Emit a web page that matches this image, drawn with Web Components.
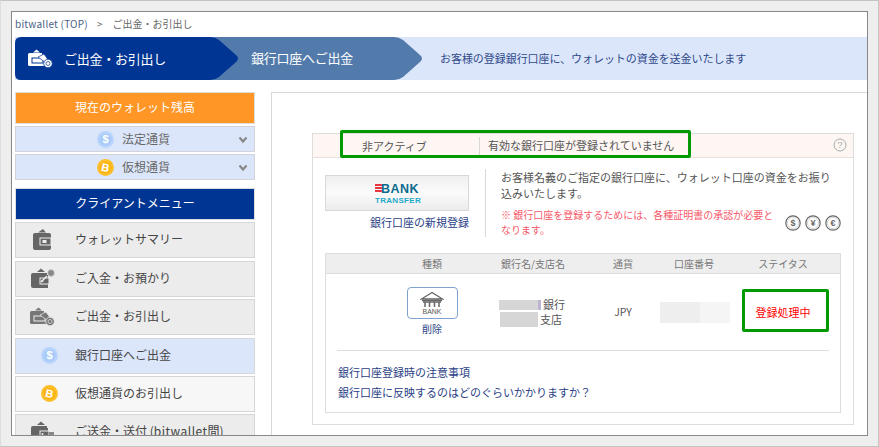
<!DOCTYPE html>
<html lang="ja"><head><meta charset="utf-8"><title>bitwallet</title>
<style>
html,body{margin:0;padding:0;background:#eee;width:879px;height:447px;overflow:hidden;font-family:"Noto Sans CJK JP","Noto Sans",sans-serif;color:#444}
</style></head><body>
<bw-frame>
  <bw-crumbs></bw-crumbs>
  <bw-steps></bw-steps>
  <div style="display:flex;margin-top:12px">
    <bw-sidebar></bw-sidebar>
    <bw-main></bw-main>
  </div>
</bw-frame>
<script>
const FONT='"Noto Sans CJK JP","Noto Sans",sans-serif';
const wallet=(fill,extra='',vb='0 0 26 22',w=26,h=22)=>`<svg width="${w}" height="${h}" viewBox="${vb}" aria-hidden="true"><path d="M8 4 12 0.5 16 4Z" fill="${fill}"/><path d="M2 7a2 2 0 0 1 2-2h14v2h1v13H4a2 2 0 0 1-2-2Z" fill="${fill}"/><rect x="11" y="10" width="9" height="6" fill="${fill}" stroke="#eee" stroke-width="1"/><circle cx="13.5" cy="13" r="1" fill="#eee"/>${extra}</svg>`;
const walletBig=`<svg width="20" height="21" viewBox="0 0 20 21" aria-hidden="true"><path d="M6 3.500 11 0 14 3.500Z" fill="#666"/><path d="M1 6a2 2 0 0 1 2-2h14a2 2 0 0 1 2 2v13a2 2 0 0 1-2 2H3a2 2 0 0 1-2-2Z" fill="#666"/><rect x="8" y="9" width="11" height="7" fill="#666" stroke="#eee" stroke-width="1"/><rect x="10.500" y="11" width="4" height="3" fill="#eee"/></svg>`;
const dep=wallet('#666',`<path d="M12 14 18 8" stroke="#eee" stroke-width="1.500"/><circle cx="22" cy="5" r="3.400" fill="#888" stroke="#ddd" stroke-width=".6"/>`);
const wd=(c,b)=>`<svg width="26" height="20" viewBox="0 0 26 20" aria-hidden="true"><path d="M6 3.500 9.500 0.500 13 3.500Z" fill="${c}"/><path d="M1 5.500a1.500 1.500 0 0 1 1.500-1.500H15v1.500l2 3V17H2.500A1.500 1.500 0 0 1 1 15.500Z" fill="${c}"/><rect x="5" y="9" width="11" height="5" fill="${c}" stroke="${b}"/><path d="M11 8 17 5l5 7-3 2Z" fill="${c}" stroke="${b}" stroke-width=".7"/><circle cx="21" cy="14.500" r="4.300" fill="${c}" stroke="${b}" stroke-width=".8"/><circle cx="21" cy="14.500" r="2" fill="none" stroke="${b}" stroke-width=".7"/></svg>`;
const coin=(bg,ring,sym,rot)=>`<svg width="17" height="17" viewBox="0 0 17 17" aria-hidden="true"><circle cx="8.500" cy="8.500" r="8.500" fill="${ring}"/><circle cx="8.500" cy="8.500" r="6.300" fill="${bg}"/><text x="8.500" y="12.300" text-anchor="middle" font-family="Liberation Sans" font-size="11" font-weight="700" fill="#fff" transform="rotate(${rot} 8.500 8.500)">${sym}</text></svg>`;
const usd=coin('#a9cbfb','#b9d5fb','$',0), btc=coin('#fcb416','#fcc02c','B',12);
const def=(n,css,html)=>customElements.define(n,class extends HTMLElement{connectedCallback(){if(this.shadowRoot)return;const s=this.attachShadow({mode:'open'});s.innerHTML=`<style>${css}</style>`+html;}});

def('bw-frame',`:host{display:block;position:relative;box-sizing:border-box;margin:0;width:879px;height:447px;border:1px solid #c4c4c4;border-left-color:#ddd;padding:10px;overflow:hidden}
.w{box-sizing:border-box;width:857px;height:425px;border:1px solid #888;background:#fff;overflow:hidden;padding:0 0 0 3px}`,`<div class="w"><slot></slot></div>`);

def('bw-crumbs',`:host{display:block;height:25px;font:10px/24px ${FONT};white-space:nowrap}
span{color:#666}.a{color:#4a6285;letter-spacing:.22px}i{font-style:normal;margin:0 10px 0 9px;color:#666}`,
`<span class="a">bitwallet (TOP)</span><i>&gt;</i><span>ご出金・お引出し</span>`);

def('bw-steps',`:host{display:flex;height:43px;background:#dce6fb;font:13px/42px ${FONT};color:#fff;white-space:nowrap;align-items:stretch;letter-spacing:-.25px}
.s1{position:relative;z-index:2;width:223px;flex:none;background:#003594;display:flex;align-items:center;padding-left:12px;box-sizing:border-box;clip-path:path("M6 0H195Q200 0 204 3L221 18Q225 21.500 221 25L204 40Q200 43 195 43H6Q0 43 0 37V6Q0 0 6 0Z")}
.s1 svg{margin-right:11px}
.s2{width:212px;flex:none;margin-left:-28px;background:#527aab;padding-left:41px;box-sizing:border-box;clip-path:path("M0 0H184Q189 0 193 3L210 18Q214 21.500 210 25L193 40Q189 43 184 43H0Z")}
.d{font-size:11px;color:#2f4a8a;margin-left:18px;letter-spacing:-.05px}`,
`<div class="s1">${wd('#fff','#003594')}<span>ご出金・お引出し</span></div><div class="s2">銀行口座へご出金</div><div class="d">お客様の登録銀行口座に、ウォレットの資金を送金いたします</div>`);

def('bw-sidebar',`:host{display:block;width:240px;flex:none;font:12px/1 ${FONT}}
.h{box-sizing:border-box;height:32px;border:1px solid #ddd;color:#fff;display:flex;align-items:center;justify-content:center;font-size:12px;padding-bottom:2px}
.o{background:#ff9626}.b{background:#003594;margin-top:8px}
.c{box-sizing:border-box;height:26px;margin-top:2px;background:#dce6fb;border:1px solid #d3d3dc;position:relative;display:flex;align-items:center;justify-content:center;color:#666;gap:8px;padding-right:3px}
.c svg.ch{position:absolute;right:6px;top:9px}
.gap{height:2px}`,
`<div class="h o">現在のウォレット残高</div>
<div class="c">${usd}<span>法定通貨</span><svg class="ch" width="10" height="8" viewBox="0 0 10 8"><path d="M1.500 1.500 5 5.500 8.500 1.500" fill="none" stroke="#888" stroke-width="2.200"/></svg></div>
<div class="c">${btc}<span>仮想通貨</span><svg class="ch" width="10" height="8" viewBox="0 0 10 8"><path d="M1.500 1.500 5 5.500 8.500 1.500" fill="none" stroke="#888" stroke-width="2.200"/></svg></div>
<div class="h b">クライアントメニュー</div><div class="gap"></div>
<bw-item mt="0" pad="16" bg="#ececec" label="ウォレットサマリー" icon="big"></bw-item>
<bw-item mt="3" pad="13" bg="#ececec" label="ご入金・お預かり" icon="dep"></bw-item>
<bw-item mt="2" pad="13" bg="#ececec" label="ご出金・お引出し" icon="wd"></bw-item>
<bw-item mt="3" pad="25" bg="#dce6fb" label="銀行口座へご出金" icon="usd"></bw-item>
<bw-item mt="2" pad="25" bg="#f7f7f7" label="仮想通貨のお引出し" icon="btc"></bw-item>
<bw-item mt="2" pad="13" bg="#ececec" label="ご送金・送付 (&lt;span style='letter-spacing:.5px'&gt;bitwallet&lt;/span&gt;間)" icon="dep2"></bw-item>`);

customElements.define('bw-item',class extends HTMLElement{connectedCallback(){if(this.shadowRoot)return;const s=this.attachShadow({mode:'open'});
const ic={big:walletBig,dep:dep,wd:wd('#777','#eee'),usd:usd,btc:btc,dep2:wallet('#666','<rect x="20" y="11" width="5" height="7" fill="#888"/>')}[this.getAttribute('icon')];
s.innerHTML=`<style>:host{display:flex;box-sizing:border-box;height:36px;margin-top:${this.getAttribute('mt')}px;background:${this.getAttribute('bg')};border:1px solid #d6d6d6;padding-bottom:2px;align-items:center;color:#444;font:12px/1 ${FONT};white-space:nowrap}
.i{width:59px;flex:none;display:flex;padding-left:${this.getAttribute('pad')}px;box-sizing:border-box;margin-top:1px}</style><div class="i">${ic}</div><span>${this.getAttribute('label')}</span>`;}});

def('bw-main',`:host{display:block;position:relative;box-sizing:border-box;width:596px;margin-left:16px;border-top:1px solid #d8d8d8;border-left:1px solid #d8d8d8;height:360px;padding:40px 13px 0 40px;font:11px/1 ${FONT};color:#555}
.p{box-sizing:border-box;width:542px;height:292px;border:1px solid #ddd;padding:0}
.st{box-sizing:border-box;height:24px;background:#fdf6f3;border-bottom:1px solid #eadfda;display:flex;align-items:center;position:relative}
.st .a{margin-left:49px;width:117px;border-right:1px solid #d8d8d8;line-height:18px;color:#555}
.st .b{margin-left:8px;color:#555}
.q{position:absolute;right:6px;top:4px}
.top{display:flex;padding:11px 0 0 12px;height:84px;box-sizing:border-box}
.bank{width:144px}
.btn{box-sizing:border-box;height:36px;margin-top:6px;border:1px solid #d8d8d8;background:linear-gradient(#efefef,#fbfbfb 50%,#ececec);display:flex;align-items:center;justify-content:center}
.reg{text-align:right;color:#2b3f86;margin-top:5px;line-height:12px}
.txt{margin-left:16px;border-left:1px solid #d8d8d8;padding:1px 0 0 15px;width:348px;height:68px;box-sizing:border-box;position:relative;line-height:15.500px;color:#555}
.n{color:#f5596a;font-size:10px;line-height:15px;margin-top:6px;width:280px}
.cur{position:absolute;right:-8px;top:46px;display:flex;gap:4px}
.tb{box-sizing:border-box;width:516px;height:160px;margin:11px 0 0 12px;border:1px solid #ddd}
.hd{display:grid;box-sizing:border-box;height:20px;background:#eee;border-bottom:1px solid #ddd;font-size:10px;line-height:19px;color:#777;text-align:center}
.cols{grid-template-columns:56px 100px 102px 78px 64px 114px}
.row{display:grid;height:76px;align-items:center;text-align:center}
.bk{display:flex;flex-direction:column;align-items:center;margin-top:-2px}
.box{box-sizing:border-box;width:51px;height:32px;border:1px solid #7fa3cf;border-radius:4px;display:flex;align-items:center;justify-content:center}
.del{color:#2b3f86;margin-top:4px;line-height:12px;font-size:10px}
.nm{text-align:left;line-height:15px;font-size:11px;color:#555;margin-left:17px}
.nm div{display:flex;align-items:center}
.m1{display:inline-block;width:42px;height:10px;margin-right:2px;background:linear-gradient(90deg,#d6d6d6 39px,#bdb5cf 39px)}
.m2{display:inline-block;width:38px;height:15px;background:#d6d6d6;margin:0 2px 0 1px}
.acc{display:block;width:70px;height:21px;background:linear-gradient(90deg,#eee 40px,#f5f5f5 40px);margin-left:-2px}
.red{color:#f00;font-size:11px}
.ln{height:1px;background:#ddd;margin:0 11px}
.lk{padding:11px 0 0 12px;color:#2b3f86;line-height:20px}
.g{position:absolute;box-sizing:border-box;border:3px solid #090;border-radius:2px}`,
`<div class="p">
  <div class="st"><div class="a">非アクティブ</div><div class="b">有効な銀行口座が登録されていません</div>
    <svg class="q" width="14" height="14" viewBox="0 0 14 14"><circle cx="7" cy="7" r="6" fill="none" stroke="#aaa" stroke-width="1"/><text x="7" y="10.200" text-anchor="middle" font-family="Liberation Sans" font-size="9.500" fill="#aaa">?</text></svg></div>
  <div class="top">
    <div class="bank"><div class="btn"><bw-banklogo></bw-banklogo></div><div class="reg">銀行口座の新規登録</div></div>
    <div class="txt">お客様名義のご指定の銀行口座に、ウォレット口座の資金をお振り込みいたします。
      <div class="n">※ 銀行口座を登録するためには、各種証明書の承認が必要となります。</div>
      <div class="cur">
      ${['$','¥','€'].map(c=>`<svg width="16" height="16" viewBox="0 0 16 16"><circle cx="8" cy="8" r="7.200" fill="#fff" stroke="#666" stroke-width="1.200"/><circle cx="8" cy="8" r="5.600" fill="none" stroke="#bbb" stroke-width=".6"/><text x="8" y="11.300" text-anchor="middle" font-family="Liberation Sans" font-size="9" font-weight="700" fill="#666">${c}</text></svg>`).join('')}
      </div>
    </div>
  </div>
  <div class="tb">
    <div class="hd cols"><span></span><span>種類</span><span>銀行名/支店名</span><span>通貨</span><span>口座番号</span><span>ステイタス</span></div>
    <div class="row cols">
      <span></span>
      <div class="bk"><div class="box"><svg width="24" height="24" viewBox="0 0 24 24"><path d="M12 1.500 1.500 8h21Z" fill="none" stroke="#666" stroke-width="1.300"/><path d="M2 9.500h20" stroke="#666" stroke-width="1.400"/><path d="M5 11v5M9.500 11v5M14.500 11v5M19 11v5M3 11h18" stroke="#666" stroke-width="1.500"/><text x="12" y="23.200" text-anchor="middle" font-family="Liberation Sans" font-size="7" fill="#555">BANK</text></svg></div><div class="del">削除</div></div>
      <div class="nm"><div><span class="m1"></span>銀行</div><div><span class="m2"></span>支店</div></div>
      <span style="color:#555;font-size:10.500px">JPY</span>
      <span class="acc"></span>
      <span class="red">登録処理中</span>
    </div>
    <div class="ln"></div>
    <div class="lk">銀行口座登録時の注意事項<br>銀行口座に反映するのはどのぐらいかかりますか？</div>
  </div>
</div>
<div class="g" style="left:68px;top:37px;width:351px;height:28px"></div>
<div class="g" style="left:470px;top:196px;width:87px;height:43px"></div>`);

def('bw-banklogo',`:host{display:block;width:44px;font-family:"Liberation Sans",sans-serif;font-weight:700;line-height:normal}
.t{display:flex;align-items:center;color:#0c6b8e;font-size:12.500px;letter-spacing:.5px}
.l{width:10px;height:9px;margin-right:-1px;background:repeating-linear-gradient(#e8343c 0 2px,transparent 2px 3px)}
.b{color:#1da9c9;font-size:8px;letter-spacing:.3px;white-space:nowrap}`,
`<div class="t"><span class="l"></span>BANK</div><div class="b">TRANSFER</div>`);
</script>
</body></html>
